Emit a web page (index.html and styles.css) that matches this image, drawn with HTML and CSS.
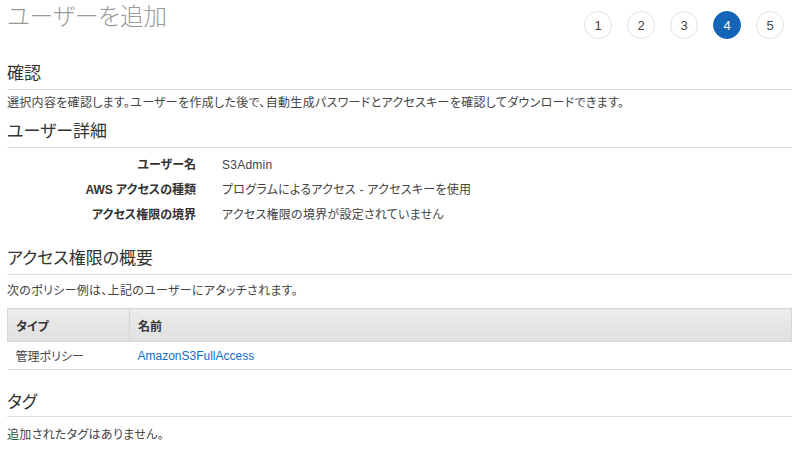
FILE: index.html
```html
<!DOCTYPE html>
<html lang="ja">
<head>
    <meta charset="UTF-8">
    <title>ユーザーを追加</title>
    <link rel="stylesheet" href="styles.css">
</head>
<body>
    <div class="page">
        <div class="page-header">
            <h1 class="page-title">ユーザーを追加</h1>
            <div class="steps">
                <span class="step">1</span>
                <span class="step">2</span>
                <span class="step">3</span>
                <span class="step active">4</span>
                <span class="step">5</span>
            </div>
        </div>

        <div class="section section-review">
            <h2 class="section-title">確認</h2>
            <p class="section-text">選択内容を確認します。ユーザーを作成した後で、自動生成パスワードとアクセスキーを確認してダウンロードできます。</p>
        </div>

        <div class="section section-details">
            <h2 class="section-title">ユーザー詳細</h2>
            <div class="details">
                <div class="detail-label">ユーザー名</div>
                <div class="detail-value">S3Admin</div>
                <div class="detail-label">AWS アクセスの種類</div>
                <div class="detail-value">プログラムによるアクセス - アクセスキーを使用</div>
                <div class="detail-label">アクセス権限の境界</div>
                <div class="detail-value">アクセス権限の境界が設定されていません</div>
            </div>
        </div>

        <div class="section section-perms">
            <h2 class="section-title">アクセス権限の概要</h2>
            <p class="section-text perms-text">次のポリシー例は、上記のユーザーにアタッチされます。</p>
            <table class="policy-table">
                <thead>
                    <tr>
                        <th class="col-type">タイプ</th>
                        <th>名前</th>
                    </tr>
                </thead>
                <tbody>
                    <tr>
                        <td class="col-type">管理ポリシー</td>
                        <td><a href="#">AmazonS3FullAccess</a></td>
                    </tr>
                </tbody>
            </table>
        </div>

        <div class="section section-tags">
            <h2 class="section-title">タグ</h2>
            <p class="section-text">追加されたタグはありません。</p>
        </div>
    </div>
</body>
</html>
```

FILE: styles.css
```css
body {
    margin: 0;
    padding: 0;
    background: #fff;
    font-family: "Liberation Sans", "Noto Sans CJK JP", sans-serif;
    font-size: 12px;
    color: #444;
    font-feature-settings: "palt";
}
.page {
    padding: 0 8px 0 7px;
}
.page-header {
    display: flex;
    justify-content: space-between;
    align-items: flex-start;
    height: 34px;
}
.page-title {
    margin: 0;
    font-size: 23.5px;
    line-height: 34px;
    font-weight: 300;
    color: #999;
}
.steps {
    display: flex;
    gap: 15px;
    margin-top: 11px;
    margin-right: 8px;
}
.step {
    width: 26px;
    height: 26px;
    border: 1px solid #e2e2e2;
    border-radius: 50%;
    display: flex;
    align-items: center;
    justify-content: center;
    font-size: 13px;
    color: #444;
}
.step.active {
    background-color: #1465b7;
    border-color: #1465b7;
    color: #fff;
}
.section-title {
    margin: 0;
    font-size: 17px;
    line-height: 24px;
    font-weight: normal;
    color: #333;
    padding-bottom: 3px;
    border-bottom: 1px solid #ddd;
}
.section-text {
    margin: 0;
    line-height: 18px;
    letter-spacing: 0.3px;
}
.section-review {
    margin-top: 28px;
}
.section-review .section-text {
    margin-top: 4px;
}
.section-details {
    margin-top: 8px;
}
.details {
    display: grid;
    grid-template-columns: 189px 1fr;
    column-gap: 26px;
    margin-top: 5px;
}
.detail-label,
.detail-value {
    line-height: 25px;
}
.detail-label {
    text-align: right;
    font-weight: bold;
    color: #333;
}
.detail-value {
    letter-spacing: 0.25px;
}
.section-perms {
    margin-top: 19px;
}
.perms-text {
    margin-top: 7px;
}
.policy-table {
    width: 100%;
    margin-top: 8px;
    border-collapse: collapse;
}
.policy-table th {
    height: 32px;
    padding: 0 8px;
    text-align: left;
    font-weight: bold;
    color: #333;
    background: linear-gradient(#ececec, #e0e0e0);
    border: 1px solid #d6d6d6;
}
.policy-table th.col-type {
    width: 105px;
}
.policy-table td {
    height: 27px;
    padding: 0 8px;
    border-bottom: 1px solid #ddd;
}
.policy-table a {
    color: #0f6fc6;
    text-decoration: none;
}
.section-tags {
    margin-top: 20px;
}
.section-tags .section-title {
    line-height: 26px;
    padding-bottom: 0;
}
.section-tags .section-text {
    margin-top: 9px;
}
```
